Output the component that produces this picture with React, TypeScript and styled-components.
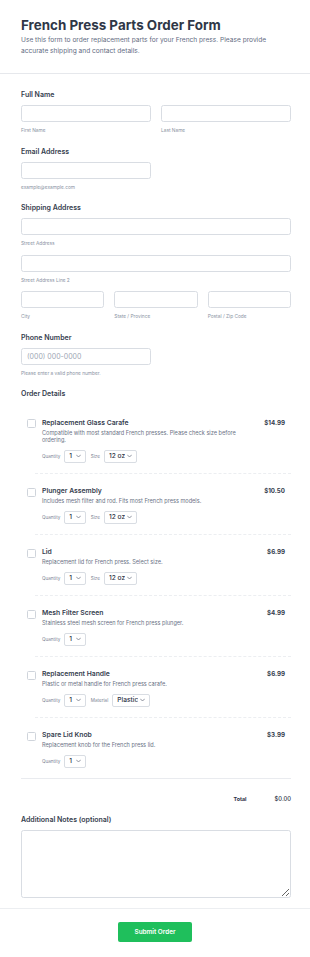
import styled, { createGlobalStyle } from "styled-components";

const GlobalStyle = createGlobalStyle`
  html, body {
    margin: 0;
    padding: 0;
    background: #ffffff;
    font-family: Inter, "Noto Sans", sans-serif;
    color: #2c3345;
  }
  * { box-sizing: border-box; }
`;

type Option = { label: string; value: string; width: number };
type Part = {
  name: string;
  desc: string;
  price: string;
  options: Option[];
};

const parts: Part[] = [
  {
    name: "Replacement Glass Carafe",
    desc: "Compatible with most standard French presses. Please check size before ordering.",
    price: "$14.99",
    options: [
      { label: "Quantity", value: "1", width: 22 },
      { label: "Size", value: "12 oz", width: 33 },
    ],
  },
  {
    name: "Plunger Assembly",
    desc: "Includes mesh filter and rod. Fits most French press models.",
    price: "$10.50",
    options: [
      { label: "Quantity", value: "1", width: 22 },
      { label: "Size", value: "12 oz", width: 33 },
    ],
  },
  {
    name: "Lid",
    desc: "Replacement lid for French press. Select size.",
    price: "$6.99",
    options: [
      { label: "Quantity", value: "1", width: 22 },
      { label: "Size", value: "12 oz", width: 33 },
    ],
  },
  {
    name: "Mesh Filter Screen",
    desc: "Stainless steel mesh screen for French press plunger.",
    price: "$4.99",
    options: [{ label: "Quantity", value: "1", width: 22 }],
  },
  {
    name: "Replacement Handle",
    desc: "Plastic or metal handle for French press carafe.",
    price: "$6.99",
    options: [
      { label: "Quantity", value: "1", width: 22 },
      { label: "Material", value: "Plastic", width: 38 },
    ],
  },
  {
    name: "Spare Lid Knob",
    desc: "Replacement knob for the French press lid.",
    price: "$3.99",
    options: [{ label: "Quantity", value: "1", width: 22 }],
  },
];

const Chevron = () => (
  <ChevronIcon width="5" height="4" viewBox="0 0 10 6" fill="none">
    <path d="M1 1l4 4 4-4" stroke="#6b7280" strokeWidth="1.5" strokeLinecap="round" strokeLinejoin="round" />
  </ChevronIcon>
);

const App = () => {
  return (
    <Page>
      <GlobalStyle />
      <Header>
        <Title>French Press Parts Order Form</Title>
        <Intro>
          Use this form to order replacement parts for your French press. Please provide
          accurate shipping and contact details.
        </Intro>
      </Header>

      <Body>
        <Group>
          <Label>Full Name</Label>
          <Row cols={2}>
            <div>
              <TextInput />
              <SubLabel>First Name</SubLabel>
            </div>
            <div>
              <TextInput />
              <SubLabel>Last Name</SubLabel>
            </div>
          </Row>
        </Group>

        <Group>
          <Label>Email Address</Label>
          <HalfInput />
          <SubLabel>example@example.com</SubLabel>
        </Group>

        <Group>
          <Label>Shipping Address</Label>
          <TextInput />
          <SubLabel>Street Address</SubLabel>
          <Spaced>
            <TextInput />
            <SubLabel>Street Address Line 2</SubLabel>
          </Spaced>
          <Spaced>
            <Row cols={3}>
              <div>
                <TextInput />
                <SubLabel>City</SubLabel>
              </div>
              <div>
                <TextInput />
                <SubLabel>State / Province</SubLabel>
              </div>
              <div>
                <TextInput />
                <SubLabel>Postal / Zip Code</SubLabel>
              </div>
            </Row>
          </Spaced>
        </Group>

        <Group>
          <Label>Phone Number</Label>
          <HalfInput placeholder="(000) 000-0000" />
          <SubLabel>Please enter a valid phone number.</SubLabel>
        </Group>

        <Group>
          <Label>Order Details</Label>
          <ItemList>
            {parts.map((p, i) => (
              <div key={p.name}>
                <Item>
                  <Check type="checkbox" />
                  <ItemBody>
                    <ItemName>{p.name}</ItemName>
                    <ItemDesc>{p.desc}</ItemDesc>
                    <Controls>
                      {p.options.map((o) => (
                        <Control key={o.label}>
                          <ControlLabel>{o.label}</ControlLabel>
                          <SelectBox style={{ width: o.width }}>
                            <Select defaultValue={o.value}>
                              <option value={o.value}>{o.value}</option>
                            </Select>
                            <Chevron />
                          </SelectBox>
                        </Control>
                      ))}
                    </Controls>
                  </ItemBody>
                  <Price>{p.price}</Price>
                </Item>
                {i < parts.length - 1 && <DashedRule />}
              </div>
            ))}
          </ItemList>
          <TotalRow>
            <TotalLabel>Total</TotalLabel>
            <TotalValue>$0.00</TotalValue>
          </TotalRow>
        </Group>

        <Group last>
          <Label>Additional Notes (optional)</Label>
          <Notes />
        </Group>
      </Body>

      <Footer>
        <SubmitButton type="button">Submit Order</SubmitButton>
      </Footer>
    </Page>
  );
};

export default App;

const Page = styled.div`
  width: 310px;
  background: #ffffff;
`;

const Header = styled.header`
  padding: 17px 21px 16px;
  border-bottom: 1px solid #e6e8ec;
`;

const Title = styled.h1`
  margin: 0;
  font-size: 13.4px;
  line-height: 16px;
  font-weight: 700;
  color: #2f3747;
`;

const Intro = styled.p`
  margin: 1.5px 0 0;
  font-size: 6.6px;
  line-height: 11px;
  color: #5f6b82;
`;

const Body = styled.main`
  padding: 16.5px 19px 10px 21px;
`;

const Group = styled.section<{ last?: boolean }>`
  margin-bottom: ${(p) => (p.last ? 0 : 12.5)}px;
`;

const Label = styled.div`
  font-size: 7px;
  line-height: 10px;
  font-weight: 600;
  color: #353d4e;
  margin-bottom: 5px;
`;

const SubLabel = styled.div`
  font-size: 4.8px;
  line-height: 8px;
  color: #8a93a3;
  margin-top: 4px;
`;

const Row = styled.div<{ cols: number }>`
  display: grid;
  grid-template-columns: repeat(${(p) => p.cols}, 1fr);
  gap: 10px;
`;

const Spaced = styled.div`
  margin-top: 7.5px;
`;

const TextInput = styled.input`
  display: block;
  width: 100%;
  height: 17px;
  border: 1px solid #d9dde3;
  border-radius: 2.5px;
  background: #ffffff;
  padding: 0 5px;
  font-family: inherit;
  font-size: 7px;
  color: #2c3345;
  outline: none;
  &::placeholder {
    color: #a0a7b4;
  }
`;

const HalfInput = styled(TextInput)`
  width: 130px;
`;

const ItemList = styled.div`
  margin-top: 6px;
  border-bottom: 1px solid #e9ebef;
`;

const Item = styled.div`
  display: flex;
  align-items: flex-start;
  gap: 6px;
  padding: 12.5px 6px 10px 6px;
`;

const Check = styled.input`
  appearance: none;
  margin: 1.5px 0 0;
  width: 9px;
  height: 9px;
  flex: none;
  border: 1px solid #cfd4db;
  border-radius: 1.5px;
  background: #ffffff;
`;

const ItemBody = styled.div`
  flex: 1;
  min-width: 0;
`;

const ItemName = styled.div`
  font-size: 6.8px;
  line-height: 9px;
  font-weight: 600;
  color: #353d4e;
`;

const ItemDesc = styled.div`
  margin-top: 3px;
  font-size: 5.6px;
  line-height: 7.5px;
  color: #6b7385;
`;

const Controls = styled.div`
  display: flex;
  align-items: center;
  gap: 5px;
  margin-top: 5px;
`;

const Control = styled.div`
  display: flex;
  align-items: center;
  gap: 3.5px;
`;

const ControlLabel = styled.span`
  font-size: 4.6px;
  color: #7b8394;
`;

const SelectBox = styled.div`
  display: flex;
  align-items: center;
  gap: 2px;
  height: 13px;
  padding: 0 3.5px 0 4.5px;
  border: 1px solid #d9dde3;
  border-radius: 2px;
  background: #ffffff;
`;

const Select = styled.select`
  appearance: none;
  flex: 1;
  width: 0;
  min-width: 0;
  border: none;
  background: transparent;
  padding: 0;
  margin: 0;
  font-family: inherit;
  font-size: 6.6px;
  font-weight: 500;
  color: #2c3345;
  outline: none;
`;

const ChevronIcon = styled.svg`
  flex: none;
  display: block;
`;

const Price = styled.div`
  flex: none;
  width: 34px;
  text-align: right;
  font-size: 6.2px;
  line-height: 9px;
  font-weight: 700;
  color: #353d4e;
`;

const DashedRule = styled.div`
  margin-left: 14px;
  border-top: 1px dashed #eceef1;
`;

const TotalRow = styled.div`
  display: flex;
  justify-content: flex-end;
  align-items: center;
  gap: 28px;
  padding-top: 16px;
  margin-bottom: 9px;
  line-height: 8px;
`;

const TotalLabel = styled.span`
  font-size: 5.4px;
  font-weight: 700;
  color: #2c3345;
`;

const TotalValue = styled.span`
  font-size: 5.8px;
  font-weight: 500;
  color: #2c3345;
`;

const Notes = styled.textarea`
  display: block;
  width: 100%;
  height: 68px;
  border: 1px solid #d9dde3;
  border-radius: 2.5px;
  font-family: inherit;
  outline: none;
`;

const Footer = styled.footer`
  display: flex;
  justify-content: center;
  padding: 12.5px 0 16px;
  border-top: 1px solid #eceef1;
`;

const SubmitButton = styled.button`
  width: 74px;
  height: 20px;
  border: none;
  border-radius: 2px;
  background: #1fbf5c;
  color: #ffffff;
  font-family: inherit;
  font-size: 6.4px;
  font-weight: 600;
`;
